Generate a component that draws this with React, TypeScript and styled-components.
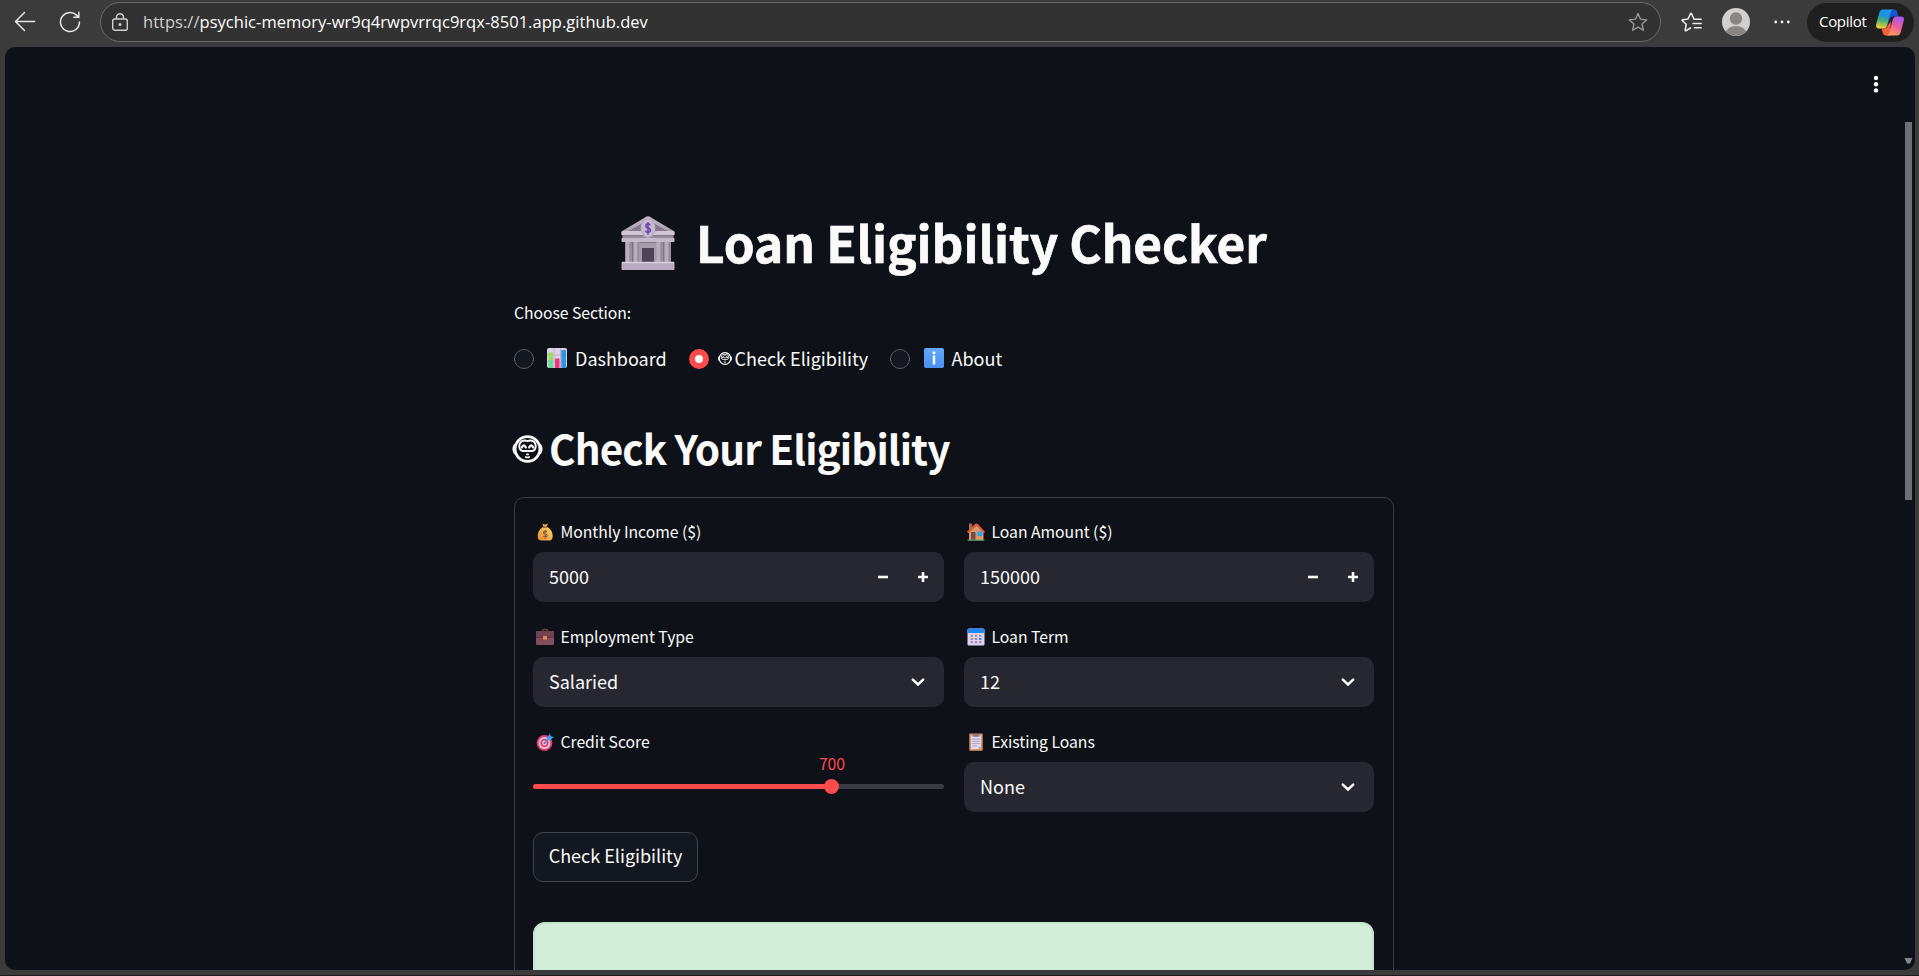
import React from "react";
import styled, { createGlobalStyle } from "styled-components";

const Global = createGlobalStyle`
  * { box-sizing: border-box; }
  html, body { margin: 0; padding: 0; background: #3b3b3b; overflow: hidden; }
  body { font-family: "Noto Sans CJK JP", "Noto Sans CJK SC", sans-serif; color: #fafafa; }
  svg { display: block; flex: none; }
`;

/* ---------- browser chrome ---------- */
const Window = styled.div`
  display: flex;
  flex-direction: column;
  width: 1919px;
  height: 976px;
  background: #3b3b3b;
  border-bottom: 1px solid #1f1a1d;
  overflow: hidden;
`;
const Toolbar = styled.header`
  display: flex;
  align-items: center;
  height: 47px;
  padding: 0 5px 3px 14px;
  flex: none;
`;
const NavIcons = styled.div`
  display: flex;
  gap: 23px;
  width: 86px;
`;
const AddressBar = styled.div`
  display: flex;
  align-items: center;
  width: 1561px;
  height: 40px;
  padding: 0 12px 0 10px;
  background: #323232;
  border: 1px solid #6b6b6b;
  border-radius: 20px;
`;
const Url = styled.div`
  flex: 1;
  margin-left: 14px;
  margin-top: -1px;
  font: 400 16.5px/24px "Open Sans", "Noto Sans", sans-serif;
  letter-spacing: 0.03px;
  color: #fff;
  white-space: nowrap;
  span { color: #d0d0d0; }
`;
const Actions = styled.div`
  display: flex;
  align-items: center;
  margin-left: 20px;
`;
const Avatar = styled.div`
  margin: 0 24px 0 20px;
`;
const CopilotButton = styled.div`
  display: flex;
  align-items: center;
  justify-content: space-between;
  width: 107px;
  height: 39px;
  margin-left: 17px;
  padding: 0 10px 0 12px;
  border-radius: 20px;
  background: #1f1f1f;
  font: 400 15px/20px "Open Sans", "Noto Sans", sans-serif;
  letter-spacing: -0.3px;
  color: #fff;
  span { margin-top: -2px; }
`;

/* ---------- page ---------- */
const Page = styled.div`
  display: flex;
  width: 1910px;
  height: 923px;
  margin-left: 5px;
  background: #0e1117;
  border-radius: 10px;
  overflow: hidden;
  flex: none;
  position: relative;
`;
const Scroller = styled.div`
  flex: 1;
  display: flex;
  justify-content: center;
`;
const Scrollbar = styled.div`
  width: 12px;
  display: flex;
  flex-direction: column;
  justify-content: space-between;
  align-items: center;
  padding: 75px 1px 6px 0;
`;
const Thumb = styled.div`
  width: 7px;
  height: 378px;
  background: #6e6e73;
`;
const Kebab = styled.svg`
  position: absolute;
  top: 27px;
  right: 34.5px;
`;
const Main = styled.main`
  width: 880px;
  padding-top: 163px;
`;
const Title = styled.h1`
  display: flex;
  align-items: center;
  gap: 21px;
  height: 66px;
  margin: 0 0 22px;
  padding-left: 107px;
  font-size: 49.5px;
  font-weight: 700;
  line-height: 66px;
  white-space: nowrap;
  letter-spacing: -0.05px;
  -webkit-text-stroke: 0.7px #fafafa;
  svg { margin-top: -1px; }
  span { margin-top: -2px; }
`;
const SmallText = styled.div`
  height: 30px;
  font-size: 15.75px;
  line-height: 30px;
  letter-spacing: -0.06px;
  white-space: nowrap;
`;
const RadioGroup = styled.div`
  display: flex;
  height: 30px;
  margin: 16px 0 46px;
`;
const Radio = styled.div<{ $w: number }>`
  display: flex;
  align-items: center;
  width: ${(p) => p.$w}px;
  font-size: 18px;
  line-height: 28px;
  white-space: nowrap;
`;
const RadioDot = styled.span<{ $on?: boolean }>`
  width: 20px;
  height: 20px;
  border-radius: 50%;
  flex: none;
  border: ${(p) => (p.$on ? "6.3px solid #ff4b4b" : "1px solid #5b5d63")};
  background: ${(p) => (p.$on ? "#fafafa" : "#131720")};
`;
const RadioIcon = styled.span<{ $l: number; $r: number }>`
  margin: -2px ${(p) => p.$r}px 0 ${(p) => p.$l}px;
`;
const RadioText = styled.span`
  margin-top: -3px;
`;
const SubTitle = styled.h2`
  display: flex;
  align-items: center;
  gap: 6px;
  height: 54px;
  margin: 0 0 23px -2px;
  font-size: 40.5px;
  font-weight: 600;
  line-height: 54px;
  letter-spacing: -0.9px;
  white-space: nowrap;
  svg { margin-top: 4px; }
  span { margin-top: 1px; }
`;
const Form = styled.form`
  border: 1px solid #3c3d42;
  border-radius: 10px;
  padding: 19px 19px 0 18px;
  height: 620px;
`;
const Grid = styled.div`
  display: grid;
  grid-template-columns: 411px 410px;
  gap: 20px;
`;
const Field = styled.div`
  height: 85px;
`;
const Label = styled.div`
  display: flex;
  align-items: center;
  gap: 6.5px;
  height: 30px;
  margin-bottom: 5px;
  padding-left: 3px;
  font-size: 15.75px;
  line-height: 28px;
  letter-spacing: -0.03px;
  white-space: nowrap;
  span { margin-top: -1px; }
`;
const Control = styled.div`
  display: flex;
  align-items: center;
  height: 50px;
  padding: 0 16px;
  border-radius: 10px;
  background: #262730;
  font-size: 18px;
  line-height: 28px;
`;
const Value = styled.div`
  flex: 1;
  margin-top: -3px;
`;
const Steps = styled.div`
  display: flex;
  gap: 30px;
`;
const SliderBox = styled.div`
  height: 50px;
`;
const SliderValue = styled.div`
  width: 60px;
  height: 22px;
  margin: -9px 0 9px 269px;
  text-align: center;
  color: #ff4b4b;
  font-size: 15.75px;
  line-height: 22px;
`;
const Track = styled.div`
  display: flex;
  align-items: center;
  height: 5px;
  border-radius: 3px;
  background: linear-gradient(to right, #ff4b4b 72.7%, #393b42 72.7%);
`;
const Knob = styled.div`
  width: 15px;
  height: 15px;
  margin-left: 291px;
  border-radius: 50%;
  background: #ff4b4b;
`;
const Submit = styled.div`
  width: 165px;
  height: 50px;
  margin: 20px 0 40px;
  border: 1px solid #41434a;
  border-radius: 10px;
  background: #131720;
  font-size: 18px;
  line-height: 45px;
  text-align: center;
  white-space: nowrap;
`;
const Result = styled.div`
  height: 140px;
  border: 2px solid #c3e6cb;
  border-radius: 12px;
  background: #d4edda;
`;

/* ---------- icons ---------- */
const BankIcon = () => (
  <svg width="54" height="54" viewBox="0 0 54 54">
    <defs>
      <linearGradient id="bk" x1="0" x2="0" y1="0" y2="1">
        <stop offset="0" stopColor="#c4bac9" />
        <stop offset="1" stopColor="#a79bae" />
      </linearGradient>
    </defs>
    <path d="M24 1.5Q27-1 30 1.5L52 14.5Q54 16 53.5 18H.5Q0 16 2 14.5Z" fill="url(#bk)" />
    <path d="M25 5 6 16h42L29 5Z" fill="#85798b" />
    <rect x=".5" y="15" width="53" height="4.5" rx="1" fill="#cfc5d4" />
    <rect x="1.5" y="19.5" width="51" height="3" fill="#95899c" />
    <rect x=".5" y="22" width="53" height="4" rx="1" fill="#c4bac9" />
    <rect x="4" y="26" width="46" height="21" fill="#7f7486" />
    <rect x="18" y="27" width="18" height="20" fill="#a69bab" />
    <rect x="21" y="32" width="12" height="15" fill="#504459" />
    {[4.5, 12.5, 35.5, 43.5].map((x) => (
      <g key={x}>
        <rect x={x} y="26" width="6" height="21" fill="#b7adbc" />
        <rect x={x + 3.8} y="26" width="2.2" height="21" fill="#978c9e" />
      </g>
    ))}
    <rect x=".5" y="46" width="53" height="8" rx="1" fill="#b8adc0" />
    <path d="M1 46.5h52" stroke="#dad1df" strokeWidth="1.5" />
    <ellipse cx="27" cy="12" rx="7.5" ry="10" fill="#b8aec0" />
    <ellipse cx="27" cy="12" rx="6.5" ry="8.6" fill="#c5bccd" />
    <path d="M29.2 9.2Q28.800 7.800 27 7.800q-2.100 0-2.100 2T27 12q2.400.3 2.400 2.200T27 16.300q-2 0-2.400-1.600M27 6v12.500" fill="none" stroke="#7143ad" strokeWidth="1.6" />
  </svg>
);
const ChartIcon = () => (
  <svg width="20" height="20" viewBox="0 0 20 20">
    <rect width="20" height="20" rx="2" fill="#ddd3e6" />
    <path d="M0 7h20M0 13.5h20M7 0v20M13.5 0v20" stroke="#b9adc6" strokeWidth=".9" />
    <rect x="1.5" y="4.5" width="4.5" height="15.5" rx=".8" fill="#9add5a" />
    <rect x="1.5" y="12" width="4.5" height="8" fill="#63dc96" />
    <rect x="8" y="10.5" width="4.5" height="9.5" rx=".8" fill="#ee3579" />
    <rect x="14.3" y="2" width="4.7" height="18" rx=".8" fill="#2c93e0" />
  </svg>
);
const InfoIcon = () => (
  <svg width="20" height="20" viewBox="0 0 20 20">
    <defs>
      <linearGradient id="inf" x1="0" x2="0" y1="0" y2="1">
        <stop offset="0" stopColor="#62a9fb" />
        <stop offset="1" stopColor="#4a8fee" />
      </linearGradient>
    </defs>
    <rect width="20" height="20" rx="1.8" fill="url(#inf)" />
    <circle cx="10" cy="4.8" r="1.5" fill="#fff" />
    <path d="M10 8.5v7" stroke="#fff" strokeWidth="2.4" strokeLinecap="round" />
  </svg>
);
const MonkeyIcon = ({ w, h, sw }: { w: number; h: number; sw: number }) => (
  <svg width={w} height={h} viewBox="0 0 30 28" fill="none" stroke="#fafafa" strokeWidth={sw} strokeLinecap="round">
    <circle cx="15" cy="14" r="12.4" />
    <path d="M2.4 10.5Q.6 14 2.4 17.5M27.6 10.5q1.8 3.5 0 7" strokeWidth={sw * 1.1} />
    <path d="M15 6.2q-2.3-1.3-4.600-.5-3.600 1.500-3.600 5.600 0 4 3.400 4.700h9.600q3.400-.7 3.400-4.700 0-4.100-3.600-5.600-2.300-.8-4.600.5Z" strokeWidth={sw * 0.7} />
    <path d="M9.300 12.400q2-4 4 0M16.700 12.400q2-4 4 0" strokeWidth={sw * 0.8} />
    <path d="M14.300 19.300h1.400M13.300 22q1.700 1 3.400 0" strokeWidth={sw * 0.6} />
  </svg>
);
const BagIcon = () => (
  <svg width="18" height="18" viewBox="0 0 18 18">
    <defs>
      <linearGradient id="bag" x1="1" x2="0" y1="0" y2="1">
        <stop offset="0" stopColor="#ffd65b" />
        <stop offset="1" stopColor="#e28a36" />
      </linearGradient>
    </defs>
    <path d="M6.5.8 9 1.5 11.8.5 10.8 4H7.4Z" fill="#e9a33d" />
    <path d="M7 4h4.4q5.3 3.3 5.3 9 0 4.6-3.7 4.6H5.6Q1.6 17.6 1.6 13q0-5.6 5.4-9Z" fill="url(#bag)" />
    <path d="M6.8 4.2h4.6" stroke="#9b5936" strokeWidth="1.2" />
    <path d="M11 9.2q-.4-1-1.8-1-1.7 0-1.7 1.3t1.7 1.500q2 .2 2 1.600t-2 1.500q-1.500 0-1.900-1.100M9.200 7v8.500" fill="none" stroke="#915a47" strokeWidth="1.2" />
  </svg>
);
const CaseIcon = () => (
  <svg width="18" height="18" viewBox="0 0 18 18">
    <path d="M6.5 4V2.5Q6.5 1.5 7.5 1.5h3q1 0 1 1V4" fill="none" stroke="#6b4149" strokeWidth="1.3" />
    <rect y="3" width="18" height="14" rx="1.3" fill="#824e5c" />
    <rect y="3" width="18" height="6" rx="1.3" fill="#714351" />
    <path d="M0 9.3h18" stroke="#5c2f52" />
    <rect x="7" y="8" width="4" height="3.5" rx=".5" fill="#e98858" />
  </svg>
);
const HouseIcon = () => (
  <svg width="18" height="18" viewBox="0 0 18 18">
    <rect x="2" y=".5" width="3" height="7" fill="#a86e4c" />
    <path d="M2 9 9.5 2.5 16.5 9v8H2Z" fill="#d89a68" />
    <path d="M.7 9.5 8.6 1.8q.8-.7 1.6 0l7.2 7.7" fill="none" stroke="#e5583e" strokeWidth="2" />
    <rect x="4" y="9" width="4.5" height="8" fill="#754b4d" />
    <rect x="10.3" y="8.5" width="5" height="4.5" fill="#35a4ea" />
    <path d="M.5 17.2h17" stroke="#58a669" strokeWidth="1.2" />
  </svg>
);
const CalendarIcon = () => (
  <svg width="18" height="18" viewBox="0 0 18 18">
    <rect x=".5" y=".5" width="17" height="17" rx="1.5" fill="#ddd3ef" />
    <path d="M.5 5V2Q.5.5 2 .5h14q1.500 0 1.500 1.500v3Z" fill="#2489ee" />
    {[7.8, 11, 14.2].map((y) => [4.8, 9, 13.2].map((x) => (
      <rect key={`${x}-${y}`} x={x - 1.2} y={y - 1} width="2.4" height="2" fill={x > 13 && y === 11 ? "#3293ee" : "#9d90ad"} />
    )))}
  </svg>
);
const TargetIcon = () => (
  <svg width="18" height="18" viewBox="0 0 18 18">
    <circle cx="8.5" cy="10" r="7.9" fill="#e13d72" />
    <circle cx="8.5" cy="10" r="5.9" fill="#e2cfe0" />
    <circle cx="8.5" cy="10" r="4.2" fill="#dd3d72" />
    <circle cx="8.5" cy="10" r="2.4" fill="#e2cfe0" />
    <circle cx="8.5" cy="10" r="1.1" fill="#d5386d" />
    <path d="m8.7 9.8 5-5" stroke="#4d88c5" strokeWidth="1.3" />
    <path d="m11 4.7 3-4.200.8 2.700 3 .7-4.300 3.600-2.500-.2Z" fill="#3ba1f3" />
  </svg>
);
const ClipboardIcon = () => (
  <svg width="18" height="18" viewBox="0 0 18 18">
    <rect x="2.3" y=".5" width="13.4" height="17.2" rx=".8" fill="#d6925e" />
    <path d="M4 2.5h10v11.2l-2.5 2.5H4Z" fill="#e5daf0" />
    <path d="M11.5 16.2v-2.5H14Z" fill="#b7a4c6" />
    <path d="M5.5 1h7v2.8h-7Z" fill="#8d7f93" />
    <path d="M5 6h8M5 8.3h8M5 10.6h8M5 12.9h5" stroke="#9b8da9" strokeWidth=".8" />
  </svg>
);
const MinusIcon = () => (
  <svg width="10" height="10" viewBox="0 0 10 10"><path d="M0 5h10" stroke="#fafafa" strokeWidth="2.6" /></svg>
);
const PlusIcon = () => (
  <svg width="10" height="10" viewBox="0 0 10 10"><path d="M0 5h10M5 0v10" stroke="#fafafa" strokeWidth="2.6" /></svg>
);
const ChevronIcon = () => (
  <svg width="20" height="20" viewBox="0 0 20 20">
    <path d="m4.800 7.600 5.200 4.900 5.200-4.900" fill="none" stroke="#fafafa" strokeWidth="2.5" strokeLinecap="round" />
  </svg>
);
const starPath = "M10 1.5l2.5 5.7 6.3.6-4.7 4.2 1.3 6.3L10 15.1l-5.4 3.2 1.3-6.3L1.2 7.8l6.3-.6Z";
const CopilotLogo = () => (
  <svg width="28" height="27" viewBox="0 0 28 27">
    <defs>
      <linearGradient id="c1" x1="0.5" x2="0.3" y1="0" y2="1">
        <stop offset="0" stopColor="#159df0" />
        <stop offset=".3" stopColor="#1b8fe0" />
        <stop offset=".6" stopColor="#4fb070" />
        <stop offset="1" stopColor="#ffd02f" />
      </linearGradient>
      <linearGradient id="c2" x1=".7" x2=".3" y1="0" y2="1">
        <stop offset="0" stopColor="#a957f2" />
        <stop offset=".5" stopColor="#ea5c98" />
        <stop offset="1" stopColor="#ffa05c" />
      </linearGradient>
    </defs>
    <path d="M14 .5h4.2q2.300 0 3 2.300L22.300 7.500H17Q14.500 7.500 13.700 10L12 16Z" fill="#1c51d0" />
    <path d="M14 26.5H9.8q-2.200 0-2.900-2.300L5.700 19.500H8q3 0 3.800-3L15 12Z" fill="#f4603c" />
    <path d="M7 .5h10.500q-2.200.2-2.900 2.700L11.400 16q-1 3.500-4 3.500H3q-4 0-2.700-4.500L3.200 4Q4.200.5 7 .5Z" fill="url(#c1)" />
    <path d="M21 26.5H10.500q2.200-.2 2.900-2.700L16.600 11q1-3.500 4-3.500H25q4 0 2.700 4.500L24.800 23q-1 3.500-3.800 3.500Z" fill="url(#c2)" />
  </svg>
);

const Labelled = ({ icon, text, children }: { icon: React.ReactNode; text: string; children: React.ReactNode }) => (
  <Field>
    <Label>{icon}<span>{text}</span></Label>
    {children}
  </Field>
);
const NumberInput = ({ value }: { value: string }) => (
  <Control><Value>{value}</Value><Steps><MinusIcon /><PlusIcon /></Steps></Control>
);
const Select = ({ value }: { value: string }) => (
  <Control><Value>{value}</Value><ChevronIcon /></Control>
);

export default function App() {
  return (
    <>
      <Global />
      <Window>
        <Toolbar>
          <NavIcons>
            <svg width="22" height="22" viewBox="0 0 22 22" fill="none" stroke="#e8e8e8" strokeWidth="1.5" strokeLinecap="round" strokeLinejoin="round">
              <path d="M20.5 10.5H1.7M10.5 1.5 1.5 10.5l9 9" />
            </svg>
            <svg width="22" height="22" viewBox="0 0 22 22" fill="none" stroke="#e8e8e8" strokeWidth="1.5" strokeLinecap="round">
              <path d="M20.5 11A9.5 9.5 0 1 1 17.5 4.1L19.5 6M19.8 1.3V6.3H14.8" />
            </svg>
          </NavIcons>
          <AddressBar>
            <svg width="18" height="20" viewBox="0 0 18 20" fill="none" stroke="#cfcfcf" strokeWidth="1.4">
              <rect x="1.7" y="7" width="14.6" height="11.2" rx="2" />
              <path d="M5.5 7V5.200a3.500 3.500 0 0 1 7 0V7" />
              <circle cx="9" cy="12.6" r=".8" fill="#cfcfcf" />
            </svg>
            <Url><span>https://</span>psychic-memory-wr9q4rwpvrrqc9rqx-8501.app.github.dev</Url>
            <svg width="20" height="20" viewBox="0 0 20 20" fill="none" stroke="#9b9b9b" strokeWidth="1.3" strokeLinejoin="round"><path d={starPath} /></svg>
          </AddressBar>
          <Actions>
            <svg width="21" height="20" viewBox="0 0 21 20" fill="none" stroke="#f0f0f0" strokeWidth="1.5" strokeLinejoin="round" strokeLinecap="round">
              <path d="M13 7.2 10.6 1.8Q10 .8 9.4 1.8L7 7 1.7 7.7Q.6 7.9 1.4 8.8L5.2 12.3 4.2 18Q4.1 19.2 5.2 18.7L9.5 16" />
              <path d="M13.5 7.2h6.700M12 11.500h8.200M13.500 15.700h6.700" />
            </svg>
            <Avatar>
              <svg width="28" height="28" viewBox="0 0 28 28">
                <defs><clipPath id="av"><circle cx="14" cy="14" r="14" /></clipPath></defs>
                <g clipPath="url(#av)">
                  <rect width="28" height="28" fill="#d2d0ce" />
                  <circle cx="14" cy="10.5" r="6.2" fill="#8a8683" />
                  <ellipse cx="14" cy="26" rx="10.5" ry="8" fill="#8a8683" />
                </g>
              </svg>
            </Avatar>
            <svg width="16" height="4" viewBox="0 0 16 4" fill="#f0f0f0"><circle cx="1.7" cy="2" r="1.4" /><circle cx="8" cy="2" r="1.4" /><circle cx="14.3" cy="2" r="1.4" /></svg>
            <CopilotButton><span>Copilot</span><CopilotLogo /></CopilotButton>
          </Actions>
        </Toolbar>

        <Page>
          <Scroller>
            <Main>
              <Title><BankIcon /><span>Loan Eligibility Checker</span></Title>
              <SmallText>Choose Section:</SmallText>
              <RadioGroup>
                <Radio $w={175}><RadioDot /><RadioIcon $l={13} $r={8}><ChartIcon /></RadioIcon><RadioText>Dashboard</RadioText></Radio>
                <Radio $w={201}><RadioDot $on /><RadioIcon $l={9} $r={2.5}><MonkeyIcon w={14} h={13} sw={2.7} /></RadioIcon><RadioText>Check Eligibility</RadioText></Radio>
                <Radio $w={130}><RadioDot /><RadioIcon $l={14} $r={7.5}><InfoIcon /></RadioIcon><RadioText>About</RadioText></Radio>
              </RadioGroup>
              <SubTitle><MonkeyIcon w={31} h={28} sw={2.8} /><span>Check Your Eligibility</span></SubTitle>
              <Form>
                <Grid>
                  <Labelled icon={<BagIcon />} text="Monthly Income ($)"><NumberInput value="5000" /></Labelled>
                  <Labelled icon={<HouseIcon />} text="Loan Amount ($)"><NumberInput value="150000" /></Labelled>
                  <Labelled icon={<CaseIcon />} text="Employment Type"><Select value="Salaried" /></Labelled>
                  <Labelled icon={<CalendarIcon />} text="Loan Term"><Select value="12" /></Labelled>
                  <Labelled icon={<TargetIcon />} text="Credit Score">
                    <SliderBox><SliderValue>700</SliderValue><Track><Knob /></Track></SliderBox>
                  </Labelled>
                  <Labelled icon={<ClipboardIcon />} text="Existing Loans"><Select value="None" /></Labelled>
                </Grid>
                <Submit>Check Eligibility</Submit>
                <Result />
              </Form>
            </Main>
          </Scroller>
          <Scrollbar>
            <Thumb />
            <svg width="9" height="6" viewBox="0 0 9 6"><path d="M.5 0h8L6 5.500H3Z" fill="#85858a" /></svg>
          </Scrollbar>
          <Kebab width="10" height="20" viewBox="0 0 10 20" fill="#fafafa"><circle cx="5" cy="4" r="2.2" /><circle cx="5" cy="10.2" r="2.2" /><circle cx="5" cy="16.4" r="2.2" /></Kebab>
        </Page>
      </Window>
    </>
  );
}
